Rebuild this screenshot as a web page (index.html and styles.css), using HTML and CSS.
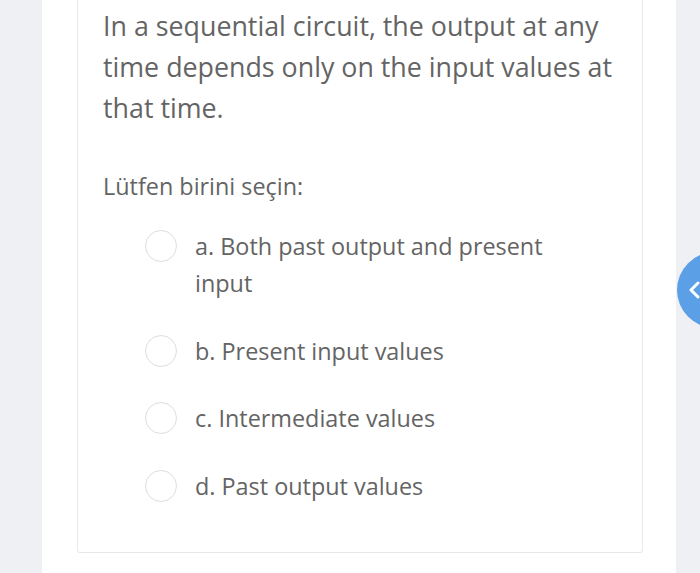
FILE: index.html
```html
<!DOCTYPE html>
<html>
<head>
<meta charset="utf-8">
<link rel="stylesheet" href="styles.css">
</head>
<body>
<div class="page">
  <div class="panel">
    <div class="card">
      <p class="question">In a sequential circuit, the output at any time depends only on the input values at that time.</p>
      <p class="prompt">Lütfen birini seçin:</p>
      <div class="options">
        <label class="option"><span class="radio"></span><span class="label">a. Both past output and present input</span></label>
        <label class="option"><span class="radio"></span><span class="label">b. Present input values</span></label>
        <label class="option"><span class="radio"></span><span class="label">c. Intermediate values</span></label>
        <label class="option"><span class="radio"></span><span class="label">d. Past output values</span></label>
      </div>
    </div>
  </div>
</div>
<div class="drawer-toggle">
  <div class="drawer-circle">
    <svg width="14" height="20" viewBox="0 0 14 20"><path d="M11 3 L4 10 L11 17" fill="none" stroke="#fff" stroke-width="3" stroke-linecap="round" stroke-linejoin="round"/></svg>
  </div>
</div>
</body>
</html>
```
FILE: styles.css
```css
html, body {
  margin: 0;
  padding: 0;
  height: 100%;
  overflow: hidden;
}
body {
  background: #eff0f3;
  font-family: "Open Sans", "Noto Sans", sans-serif;
  color: #646464;
}
.page {
  padding-left: 42px;
  width: 634px;
}
.panel {
  background: #fff;
  padding: 0 33px 40px 35px;
  min-height: 573px;
  box-sizing: border-box;
}
.card {
  border: 1px solid #e8e8e8;
  border-top: 0;
  border-radius: 0 0 3px 3px;
  padding: 5px 16px 47px 25px;
}
.question {
  margin: 0;
  font-size: 26.8px;
  line-height: 41px;
}
.prompt {
  margin: 40px 0 0;
  font-size: 23.4px;
  line-height: 37px;
}
.options {
  margin-top: 23px;
  padding-left: 42px;
  display: flex;
  flex-direction: column;
  gap: 30.5px;
}
.option {
  display: flex;
  align-items: flex-start;
  font-size: 23.4px;
  line-height: 37px;
}
.radio {
  flex: none;
  width: 30px;
  height: 30px;
  border: 1.5px solid #dedede;
  border-radius: 50%;
  margin-top: 2px;
  margin-right: 18px;
}
.label {
  max-width: 370px;
}
.drawer-toggle {
  position: absolute;
  left: 677px;
  top: 252px;
  width: 23px;
  height: 76px;
  overflow: hidden;
}
.drawer-circle {
  width: 76px;
  height: 76px;
  border-radius: 50%;
  background: #5b9fe6;
  display: flex;
  align-items: center;
  padding-left: 10px;
  box-sizing: border-box;
}
```
